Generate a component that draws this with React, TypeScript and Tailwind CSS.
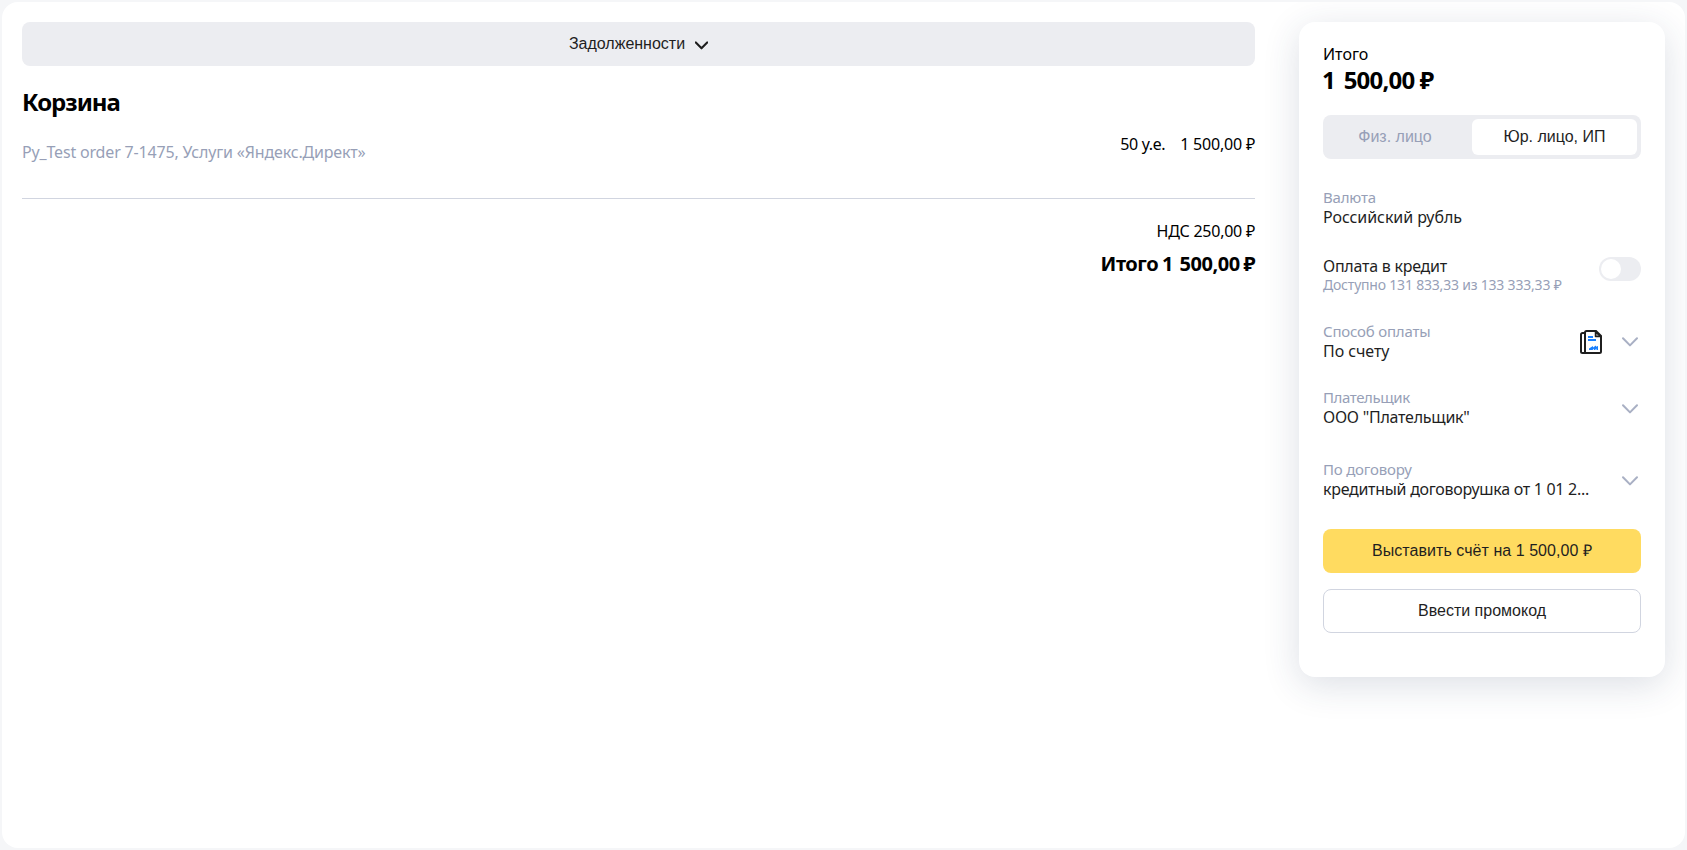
import { ReactNode } from "react";

function Chevron({ className }: { className: string }) {
  return (
    <svg className={className} viewBox="0 0 16 10" fill="none" stroke="currentColor" strokeLinecap="round" strokeLinejoin="round">
      <path d="M1 1.200l7 7.200 7-7.200" />
    </svg>
  );
}

function InvoiceIcon() {
  return (
    <svg className="h-6 w-[22px]" viewBox="0 0 22 24" fill="none">
      <path d="M5 3H2.500A1.500 1.500 0 0 0 1 4.500V21.500A1.500 1.500 0 0 0 2.500 23H5" stroke="#1f1f1f" strokeWidth="2" />
      <path d="M5 23V2.500A1.500 1.500 0 0 1 6.500 1H16l5 5v15.500A1.500 1.500 0 0 1 19.500 23H5z" stroke="#1f1f1f" strokeWidth="2" />
      <path d="M15.500 1.500V6.500H20.500z" stroke="#1f1f1f" strokeWidth="1.500" fill="#999" strokeLinejoin="round" />
      <path d="M8 7h5M8 10h8" stroke="#1a80ff" strokeWidth="2" />
      <path d="M9 20v-1.500l4-2.500v1.500l3-2v1.300l2-.8v4h-1.500v-1.500l-1.500 1.500h-1v-1.200L12.500 20z" fill="#1a80ff" />
    </svg>
  );
}

interface FieldProps {
  label: string;
  value: string;
  className: string;
  labelClass?: string;
  valueClass?: string;
  children?: ReactNode;
}

function Field({ label, value, className, labelClass = "tracking-[-0.2px]", valueClass = "tracking-[-0.07px]", children }: FieldProps) {
  return (
    <div className={`flex items-center justify-between ${className}`}>
      <div>
        <div className={`text-[15px] leading-5 text-[#979fb7] ${labelClass}`}>{label}</div>
        <div className={`leading-5 text-[#1f1f1f] ${valueClass}`}>{value}</div>
      </div>
      <div className="flex items-center gap-5 pt-0.5 pr-[3px] text-[#a9b0c4]">{children}</div>
    </div>
  );
}

export default function App() {
  return (
    <div className="h-[850px] bg-[#f5f6f8] p-0.5 font-['Noto_Sans',sans-serif] text-base text-black">
      <div className="flex h-[846px] items-start justify-between overflow-hidden rounded-2xl bg-white p-5">
        <main className="w-[1233px]">
          <button className="flex h-11 w-full items-center justify-center gap-2.5 rounded-lg bg-[#ecedf1] font-['Liberation_Sans',sans-serif] text-[#1f1f1f]">
            <span>Задолженности</span>
            <Chevron className="mt-0.5 h-[9px] w-[13px] stroke-[2.6]" />
          </button>
          <h1 className="mt-5 text-2xl leading-8 font-bold tracking-[-1px]">Корзина</h1>
          <div className="mt-4 flex h-[65px] items-start justify-between border-b border-[#d1d5e0]">
            <div className="mt-2 leading-5 tracking-[-0.17px] text-[#979fb7]">Py_Test order 7-1475, Услуги «Яндекс.Директ»</div>
            <div className="flex gap-[15px] leading-5">
              <span className="tracking-[-0.35px]">50 у.е.</span>
              <span className="tracking-[-0.2px]">1 500,00 ₽</span>
            </div>
          </div>
          <div className="mt-[22px] text-right leading-5 tracking-[-0.25px]">НДС 250,00 ₽</div>
          <div className="mt-[9px] text-right text-xl leading-7 font-bold tracking-[-0.46px]">
            Итого <span className="-ml-px tracking-[1.500px]">1</span> 500,00 <span className="-ml-px">₽</span>
          </div>
        </main>
        <aside className="h-[655px] w-[366px] rounded-2xl bg-white px-6 pt-[22px] shadow-[0_8px_36px_rgba(40,55,95,0.16)]">
          <div className="leading-5">Итого</div>
          <div className="text-2xl leading-8 font-bold tracking-[-0.8px]">
            <span className="-ml-px tracking-[2.500px]">1</span> 500,00 <span>₽</span>
          </div>
          <div className="mt-[19px] flex h-11 rounded-lg bg-[#ecedf1] p-1 font-['Liberation_Sans',sans-serif]">
            <button className="flex-1 pr-[9px] text-[#979fb7]">Физ. лицо</button>
            <button className="w-[165px] rounded-md bg-white text-[#1f1f1f]">Юр. лицо, ИП</button>
          </div>
          <Field className="mt-7" label="Валюта" value="Российский рубль" />
          <div className="mt-[29px] flex items-start justify-between">
            <div>
              <div className="leading-5 tracking-[-0.25px] text-[#1f1f1f]">Оплата в кредит</div>
              <div className="text-sm leading-[18px] tracking-[-0.2px] text-[#979fb7]">Доступно 131 833,33 из 133 333,33 ₽</div>
            </div>
            <div className="mt-px h-6 w-[42px] rounded-full bg-[#ecedf1] p-0.5">
              <div className="size-5 rounded-full bg-white" />
            </div>
          </div>
          <Field className="mt-[27px]" label="Способ оплаты" value="По счету">
            <InvoiceIcon />
            <Chevron className="h-2.5 w-4 stroke-2" />
          </Field>
          <Field className="mt-[26px]" label="Плательщик" value={'ООО "Плательщик"'} labelClass="tracking-[-0.4px]" valueClass="tracking-[-0.25px]">
            <Chevron className="mt-px h-2.5 w-4 stroke-2" />
          </Field>
          <Field className="mt-8" label="По договору" value="кредитный договорушка от 1 01 2..." valueClass="tracking-[-0.29px]">
            <Chevron className="mt-px h-2.5 w-4 stroke-2" />
          </Field>
          <div className="mt-[30px] flex flex-col gap-4 font-['Liberation_Sans',sans-serif] text-[#1f1f1f]">
            <button className="h-11 rounded-lg bg-[#ffdb60] tracking-[0.05px]">Выставить счёт на 1 500,00 ₽</button>
            <button className="h-11 rounded-lg border border-[#d1d5e0] bg-white">Ввести промокод</button>
          </div>
        </aside>
      </div>
    </div>
  );
}
